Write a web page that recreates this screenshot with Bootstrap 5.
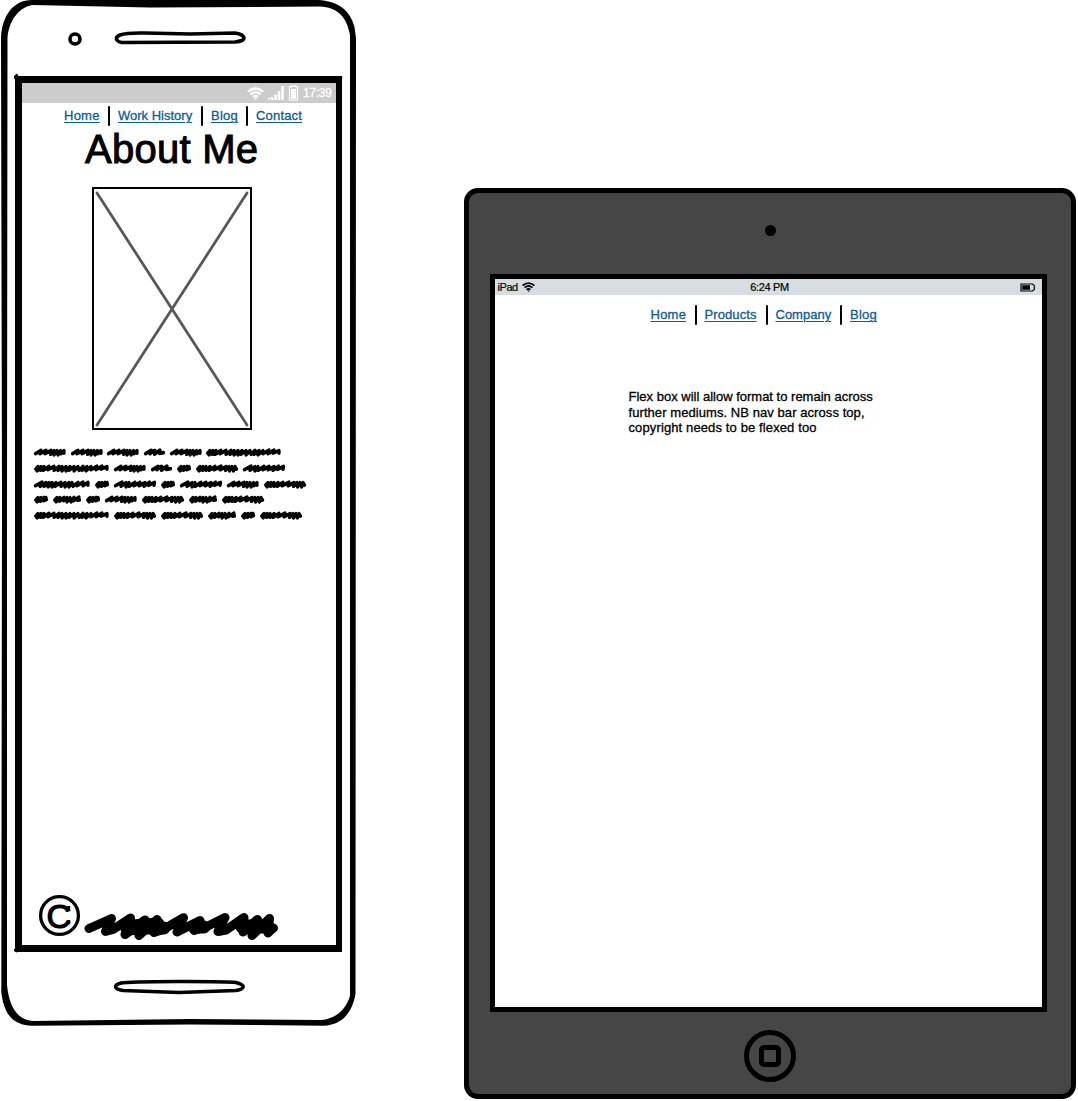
<!DOCTYPE html>
<html lang="en">
<head>
<meta charset="utf-8">
<meta name="viewport" content="width=device-width, initial-scale=1">
<title>About Me wireframe</title>
<link href="https://cdn.jsdelivr.net/npm/bootstrap@5.3.0/dist/css/bootstrap.min.css" rel="stylesheet">
<style>
body{font-family:"Liberation Sans",sans-serif;color:#000;background:#fff;width:1078px;height:1101px;overflow:hidden}
svg{display:block;flex:none}
.phone{width:356px;height:1026px;flex:none;padding:76px 14px 0 15px}
.chassis{position:absolute;left:0;top:0}
.phone-screen{height:875.5px;border:7px solid #000;border-right-width:6px;background:#fff}
.phone-bar{height:20px;background:#ccc;color:#fff;padding-right:5px}
.phone-time{font-size:12.3px;line-height:20px;width:28px;letter-spacing:-.5px;-webkit-text-stroke:.3px #fff}
.wire-nav{font-size:13px;line-height:20px}
.wire-nav a{color:#0b5a9d;text-decoration:underline;text-decoration-thickness:1px;text-underline-offset:2px;-webkit-text-stroke:.3px #0b5a9d;white-space:nowrap;flex:none}
.divide{width:2px;height:20px;border-radius:1px;background:#000;margin:0 8px 0 9px;flex:none}
.phone-nav{padding:3px 0 0 42px}
.tab-nav{padding:10px 0 0 156px}
.w-home{width:35px;letter-spacing:.25px}
.w-work{width:74px}
.w-blog{width:26px;letter-spacing:.25px}
.w-contact{width:46px;letter-spacing:.18px}
.w-products{width:52px;letter-spacing:.1px}
.w-company{width:55.5px}
.title{font-size:40px;line-height:44px;margin:1px 0 0 63px;font-weight:400;letter-spacing:.25px;-webkit-text-stroke:1px #000}
.photo{width:160px;height:243px;margin:16px 0 0 70px;border:2px solid #000}
.scribbles{margin:18px 0 0 12px}
.scribbles svg{fill:none;stroke:#000;stroke-width:3.3;stroke-linecap:round;stroke-linejoin:round;overflow:visible}
.scribbles use{transform:scale(1,1.15) translate(0,-.6px)}
.sline{gap:5px;height:15.75px}
.copyright{margin:auto 0 4px 15px}
.tablet{width:612px;height:911px;margin:188px 0 0 108px;flex:none;border:5px solid #000;border-radius:14px;background:#464646}
.camera{width:11px;height:11px;border-radius:50%;background:#000;margin-top:32px;flex:none}
.tab-screen{width:557px;height:738px;border:5px solid #000;background:#fff;margin:38px 4px 0 0;flex:none}
.tab-bar{height:16px;background:#d6dee1;font-size:11px;line-height:16px;padding:0 6px 0 3px;-webkit-text-stroke:.2px #000}
.tab-bar>*{flex:1}
.ipad{width:24px;letter-spacing:-.45px}
.clock{letter-spacing:-.35px;padding-left:6px}
.memo{font-size:13px;line-height:15.5px;margin:64px 0 0 134px;white-space:nowrap;-webkit-text-stroke:.3px #000}
.loose{letter-spacing:.07px}
.looser{letter-spacing:.12px}
.homekey{width:52px;height:52px;border:5px solid #000;border-radius:50%;margin-top:18px;flex:none}
.homekey span{width:22px;height:22px;border:5px solid #000;border-radius:5px}
</style>
<script src="https://cdn.jsdelivr.net/npm/bootstrap@5.3.0/dist/js/bootstrap.bundle.min.js"></script>
</head>
<body>
<svg width="0" height="0" class="position-absolute">
  <defs>
    <path id="s31" d="M1.500 5.500L7 2.800L6 5.500L12 2.800L11 5.500L17 2.800L16.500 6L20 3L20 6.500L23 3L24 6.500L26.500 3L27 5.500L30 3L30 5"/>
    <path id="s21" d="M1.500 5.500L7 2.800L6 5.500L9.500 3L11 3L10.500 6L16 2.500L15.500 5.200L19.500 4.700"/>
    <path id="s14" d="M1.700 5L4 3L3 6.500L7 3L6.500 6L10 2.800L9.500 5.500L12.500 4.500L12 3"/>
    <path id="s28" d="M1.700 5L4 3L3 6.500L7 3L6.500 6L11 2.800L10.500 5.500L14 3L14 6.500L17 3L18 6.500L21 2.800L20.500 5.500L26 2.600L24.500 5L26.500 4.800"/>
    <path id="s42d" d="M1.700 5L4 3L3 6.500L7 3L6.500 6L10 3L10 6L14 3L13 6L19 2.800L18 5.500L25 2.600L24 5.500L30 3L29.500 6L33 3L33.500 6.500L36 3L37.500 6.500L39 3L40.500 5"/>
    <path id="s42f" d="M1.500 5.500L8 2.600L7 6L12 3L12 6.500L15 3L15 6L21 2.800L20 5.500L26 2.800L25 5.500L31 3L30 6L35.500 2.600L34.500 5.200L40.500 2.800L40 5"/>
    <path id="s56" d="M1.500 5.500L8 2.600L6 6L12 3L10 6L15 3L14 6.500L18 3L18 6.500L22 3L21 6L27 2.800L27 6L31 3L31 6.500L35 3L35 6.500L38 3L39 6L44 2.800L43 5.500L49 2.600L49 5.500L54 2.800L54 5"/>
    <path id="s75" d="M1.700 5L4 3L3 6.500L7 3L6.500 6L10 3L9 6L15 2.800L14 5.500L20 2.800L20 6L25 2.800L24 6L28 3L28 6.500L32 3L32 6.500L36 3L35 6L40 3L40 6.500L44 3L45 6L49 2.800L48 6L53 3L52 6.500L57 3L57 5.500L63 2.600L62 5.500L68 2.600L67 5L73 3L73 5"/>
    <g id="wifi" fill="none" stroke="currentColor" stroke-width="2.300">
      <path d="M.8 4.600Q8.500-1.700 16.200 4.600M3.400 7.300Q8.500 3.100 13.600 7.300M6 9.900Q8.500 7.900 11 9.900"/>
      <path d="M6.800 11H10.200L8.500 13Z" fill="currentColor" stroke="none"/>
    </g>
  </defs>
</svg>

<div class="d-flex align-items-start">
  <section class="phone position-relative">
    <svg class="chassis" width="357" height="1026" viewBox="0 0 357 1026">
      <path fill-rule="evenodd" d="M1 38C2 16 13 0 32 0H318C338 1 350 10 354.500 27L356 38L355.500 994C352 1014 341 1025 324 1025.700L190 1024.500L32 1025.700C14 1025 4 1016 1.300 992L2 500ZM7.500 38L7 500V985C9 1006 17 1020 33 1021L190 1019L322 1020C337 1018 346 1009 350 996V35C347 17 337 7 320 6.500L150 7.500L32 5C18 8 9 21 7.500 38Z"/>
      <g fill="none" stroke="#000" stroke-width="3.600">
        <circle cx="75" cy="39" r="5"/>
        <path d="M120 35C127 32.500 136 33 145 33L190 34L235 33C247 35 247 41 235 42L122 42.500C115 41 115 37 120 35Z"/>
        <path d="M121 983C130 981 225 981 236 982.500C246 985 245 989 236 990.500L179 992.500L123 990.500C114 989 113 985 121 983Z"/>
      </g>
      <path d="M14 79V76L17 73.500L19 77ZM340 76L342.700 77.500L341 80ZM14 949V951L17 952.500L21 950Z"/>
    </svg>
    <div class="phone-screen position-relative d-flex flex-column">
      <div class="phone-bar d-flex align-items-center justify-content-end">
        <svg width="17" height="13" viewBox="0 0 17 13"><use href="#wifi"/></svg>
        <svg class="ms-1" width="16" height="14" viewBox="0 0 16 14" fill="#fff"><path d="M-1 11.700h2.600V14H-1zM2.700 11h2.500v3H2.700zM6.300 8.500h2.500V14H6.300zM9.800 5h2.500v9H9.800zM13.300 0h2.500v14h-2.500z"/></svg>
        <svg class="mx-1" width="11" height="16" viewBox="0 0 11 16"><path d="M3.500 1.700V.8H7.500V1.700H9.500V15H1.500V1.700Z" fill="none" stroke="#fff" stroke-width="1.200"/><path d="M3 4H8V13.700H3Z" fill="#fff"/></svg>
        <span class="phone-time">17:39</span>
      </div>
      <nav class="wire-nav phone-nav d-flex">
        <a class="w-home" href="#">Home</a><span class="divide"></span>
        <a class="w-work" href="#">Work History</a><span class="divide"></span>
        <a class="w-blog" href="#">Blog</a><span class="divide"></span>
        <a class="w-contact" href="#">Contact</a>
      </nav>
      <h1 class="title">About Me</h1>
      <div class="photo">
        <svg width="156" height="239" viewBox="0 0 156 239"><path d="M3 4L153 236M153 4L3 236" stroke="#585858" stroke-width="2.800" stroke-linecap="round"/></svg>
      </div>
      <div class="scribbles">
        <div class="sline d-flex">
          <svg width="31.500" height="9"><use href="#s31"/></svg><svg width="31.500" height="9"><use href="#s31"/></svg><svg width="31.500" height="9"><use href="#s31"/></svg><svg width="21" height="9"><use href="#s21"/></svg><svg width="31.500" height="9"><use href="#s31"/></svg><svg width="75" height="9"><use href="#s75"/></svg>
        </div>
        <div class="sline d-flex">
          <svg width="75" height="9"><use href="#s75"/></svg><svg width="31.500" height="9"><use href="#s31"/></svg><svg width="21" height="9"><use href="#s21"/></svg><svg width="14" height="9"><use href="#s14"/></svg><svg width="42" height="9"><use href="#s42d"/></svg><svg width="42" height="9"><use href="#s42f"/></svg>
        </div>
        <div class="sline d-flex">
          <svg width="56" height="9"><use href="#s56"/></svg><svg width="14" height="9"><use href="#s14"/></svg><svg width="42" height="9"><use href="#s42f"/></svg><svg width="14" height="9"><use href="#s14"/></svg><svg width="42" height="9"><use href="#s42f"/></svg><svg width="31.500" height="9"><use href="#s31"/></svg><svg width="42" height="9"><use href="#s42d"/></svg>
        </div>
        <div class="sline d-flex">
          <svg width="14" height="9"><use href="#s14"/></svg><svg width="28" height="9"><use href="#s28"/></svg><svg width="14" height="9"><use href="#s14"/></svg><svg width="31.500" height="9"><use href="#s31"/></svg><svg width="42" height="9"><use href="#s42d"/></svg><svg width="28" height="9"><use href="#s28"/></svg><svg width="42" height="9"><use href="#s42d"/></svg>
        </div>
        <div class="sline d-flex">
          <svg width="75" height="9"><use href="#s75"/></svg><svg width="42" height="9"><use href="#s42d"/></svg><svg width="42" height="9"><use href="#s42d"/></svg><svg width="28" height="9"><use href="#s28"/></svg><svg width="14" height="9"><use href="#s14"/></svg><svg width="42" height="9"><use href="#s42d"/></svg>
        </div>
      </div>
      <footer class="copyright d-flex">
        <svg width="45" height="46" viewBox="0 0 45 46">
          <circle cx="22.500" cy="20.500" r="18.900" fill="none" stroke="#000" stroke-width="3.300"/>
          <text x="21.800" y="32.700" font-size="34" text-anchor="middle" stroke="#000" stroke-width="1.200">C</text>
          <path d="M31.500 11V16M31.500 25V29" stroke="#000" stroke-width="3.400"/>
        </svg>
        <svg width="200" height="46" viewBox="0 0 200 46" fill="none" stroke="#000" stroke-width="9" stroke-linecap="round" stroke-linejoin="round">
          <path d="M7 33.500L29.500 23.500L23.500 36.500L31 34.500L48.500 23L43 39.500L63 25L57 40.500L75 24.500L72 37.500L82 34L101.500 22.700L95 37L118 25.500L112 35.500L124 32L143 22.500L136 36.500L144 35L162 22.500L161 37L175.500 24.500L170 40.500L187.500 23.500L186 38L191.500 33"/>
          <path d="M45 34L60 33H82M112 32H122M160 32H186M50 31L76 29M166 31H184" stroke-width="13"/>
        </svg>
      </footer>
    </div>
  </section>

  <section class="tablet d-flex flex-column align-items-center">
    <div class="camera"></div>
    <div class="tab-screen">
      <div class="tab-bar d-flex align-items-center">
        <div class="d-flex align-items-center"><span class="ipad">iPad</span><svg width="13" height="10" viewBox="0 0 17 13"><use href="#wifi"/></svg></div>
        <div class="clock text-center">6:24 PM</div>
        <div class="d-flex justify-content-end"><svg width="15" height="9" viewBox="0 0 15 9"><path d="M1 1H12.500L14.300 2.500V6.500L12.500 8H1Z" fill="none" stroke="#000" stroke-width="1.200"/><path d="M2.200 2.200H10V6.800H2.200Z"/></svg></div>
      </div>
      <nav class="wire-nav tab-nav d-flex">
        <a class="w-home" href="#">Home</a><span class="divide"></span>
        <a class="w-products" href="#">Products</a><span class="divide"></span>
        <a class="w-company" href="#">Company</a><span class="divide"></span>
        <a class="w-blog" href="#">Blog</a>
      </nav>
      <p class="memo">Flex box will allow format to remain across<br><span class="loose">further mediums. NB nav bar across top,</span><br><span class="looser">copyright needs to be flexed too</span></p>
    </div>
    <div class="homekey d-flex align-items-center justify-content-center"><span></span></div>
  </section>
</div>
</body>
</html>
